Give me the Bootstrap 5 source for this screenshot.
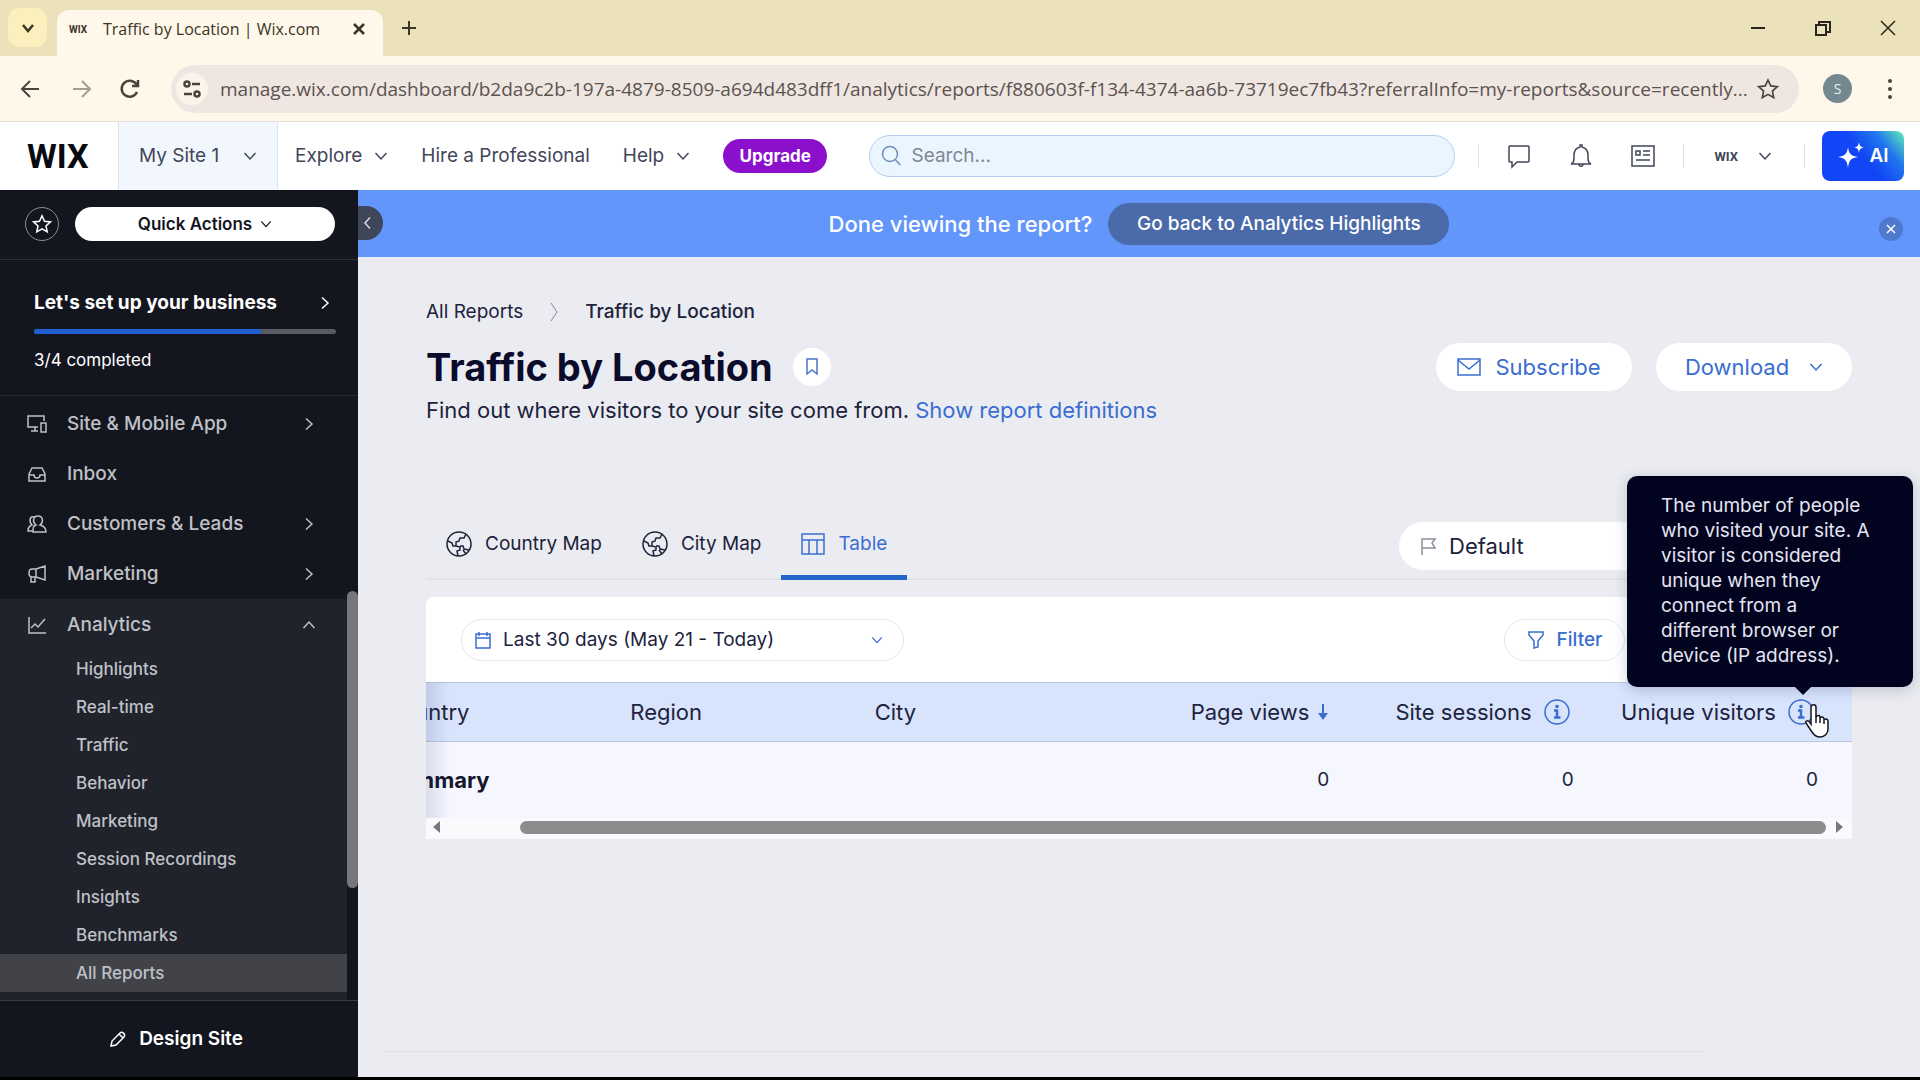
<!DOCTYPE html>
<html lang="en">
<head>
<meta charset="utf-8">
<meta name="viewport" content="width=device-width, initial-scale=1">
<title>Traffic by Location | Wix.com</title>
<link href="https://cdn.jsdelivr.net/npm/bootstrap@5.3.0/dist/css/bootstrap.min.css" rel="stylesheet">
<style>
body{font-family:Inter,"Liberation Sans",sans-serif;font-size:19px;line-height:24px;color:#20223c;background:#ebecf1}
a{text-decoration:none;color:inherit}
svg{fill:none;stroke:currentColor;stroke-width:1.5;flex-shrink:0;display:block}
button{font:inherit;color:inherit;border:0;background:none;padding:0}
.app-shell{min-height:100vh;border-bottom:3px solid #000}
/* browser frame */
.tab-strip{height:56px;background:#ebe2bb;font-family:"Open Sans",sans-serif;padding-left:8px;color:#3a3524}
.tab-search{width:39px;height:39px;border-radius:12px;background:#fbf0bd}
.page-tab{width:326px;height:46px;border-radius:12px 12px 0 0;background:#fff8ea;margin-left:10px;padding:0 14px 8px 8px;font-size:16px}
.fav{width:26px;font:700 10px Roboto,sans-serif;text-align:center}
.acct{font:700 13px Roboto,sans-serif}
.acct-btn{gap:20px;padding:0 4px 0 2px}
.win-controls{gap:41px;padding-right:20px;color:#2b2718}
.url-row{height:65px;background:#fff8ea;padding:0 20px 0 18px;font-family:"Open Sans",sans-serif;color:#4b443c}
.url-box{height:48px;border-radius:24px;background:#efe6e2;padding:0 20px 0 5px;margin-left:29px}
.url-box input{border:0;background:none;outline:0;color:#5b534f;font-size:19px;min-width:0;padding:0;margin-left:12px}
.site-info{width:32px;height:32px;border-radius:50%;background:#fcf3ea}
.avatar{width:29px;height:29px;border-radius:50%;background:#748890;color:#e3eef2;font-size:14px}
/* product header */
.top-nav{height:69px;background:#fff;border-top:1px solid #e4dfd8;color:#42465a;padding-right:16px}
.brand{font:700 34px/36px Roboto,sans-serif;color:#0a0a12;width:118px;padding-left:27px}
.site-menu{background:#f1f7fd;border:solid #dfe5ee;border-width:0 1px;width:160px;padding:0 20px}
.nav-gap{gap:33px;padding-left:17px}
.upgrade{height:34px;width:104px;border-radius:17px;background:#8a10cc;color:#fff;font-weight:700;font-size:17px}
.search{height:42px;border-radius:21px;border:1px solid #b6cdf0;background:#eaf5fe;padding:0 11px;width:586px;color:#6d8fb8}
.search input{border:0;background:none;outline:0;padding:0}
.search input::placeholder{color:#7e8794;opacity:1}
.nav-tools{gap:28px;padding-left:23px}
.nav-icons{gap:38px}
.ai-group{gap:17px}
.vr-line{width:1px;height:24px;background:#dcdfe6}
.ai-btn{width:82px;height:50px;border-radius:8px;color:#fff;font-weight:600;background:linear-gradient(50deg,#1145f5 50%,#2176ee 75%,#62efb0 100%)}
/* sidebar */
.side{width:358px;background:#14161f;color:#fff}
.quick{height:70px;border-bottom:1px solid #2d2f3b;padding:0 23px 2px 25px}
.star-btn{width:34px;height:34px;border-radius:50%;border:1px solid #8b8d96}
.quick-btn{height:34px;border-radius:17px;background:#fff;color:#14161f;font-weight:600;font-size:17px}
.setup{height:136px;border-bottom:1px solid #252732;padding:31px 22px 0 34px}
.setup .progress{height:5px;background:#5a5b62;border-radius:3px;margin-top:14px}
.setup .progress-bar{background:#1f5fd0}
.done-count{font-size:17px;margin-top:14px}
.menu-wrap{position:relative;padding:3px 11px 0 0;color:#bfc1c7;font-weight:500}
.menu-item{height:50px;padding:0 31px 0 27px}
.menu-item span{margin-left:20px}
.analytics{background:#21232c;padding:1px 0 8px}
.sub-item{display:block;height:38px;line-height:38px;padding-left:76px;font-size:17px}
.sub-item.current{background:#424349}
.thumb-v{position:absolute;right:0;top:195px;width:11px;height:297px;border-radius:6px;background:#76777b}
.design{border-top:1px solid #3a3c45;font-weight:600;padding-right:6px}
/* report */
.done-bar{height:67px;background:#6396fa;color:#fff;font-weight:500;font-size:22px;position:relative}
.back-btn{height:42px;border-radius:21px;background:#4b6aa9;font-size:19px;font-weight:500;width:341px}
.fold-btn{position:absolute;left:0;top:16px;width:25px;height:34px;padding-right:5px;border-radius:0 17px 17px 0;background:#40465a;color:#d5d8e2}
.close-btn{position:absolute;right:17px;top:27px;width:24px;height:24px;border-radius:50%;background:#4f79cd}
.report{padding:43px 68px 0}
.report h1{font-size:38px;line-height:44px;font-weight:700;color:#0b0c2b}
.title-row{margin-top:19px}
.intro{font-size:22px;line-height:28px;margin-top:5px}
.mark-btn{width:38px;height:38px;border-radius:50%;background:#fff;color:#4a74cc}
.accent{color:#3a6dd0}
.pill-btn{height:48px;border-radius:24px;background:#fff;color:#3a6dd0;font-size:22px;width:196px;padding-right:10px;gap:14px}
.pill-btn.opens{gap:20px;padding:0}
.views{margin-top:80px;height:76px;border-bottom:2px solid #e1e3e8}
.view-tab{padding:8px 20px 0;height:76px;gap:13px;border-bottom:5px solid transparent}
.view-tab.current{color:#3a6dd0;border-color:#2465cb}
.preset{height:48px;width:453px;border-radius:24px;background:#fff;padding:0 22px;margin-top:18px;font-size:22px}
.panel{background:#fff;margin-top:17px;position:relative;border-radius:8px 8px 0 0}
.tools{height:85px;padding:0 227px 0 35px}
.date-btn{height:42px;width:443px;border-radius:21px;border:1px solid #e6e8ee;padding:0 20px 0 13px}
.filter-btn{height:42px;width:121px;border-radius:21px;border:1px solid #e6e8ee;color:#3a6dd0;font-weight:500}
.grid-clip{overflow:hidden;position:relative}
.grid-clip::before{content:"";position:absolute;z-index:1;left:0;top:0;bottom:0;width:24px;background:linear-gradient(90deg,rgba(30,40,90,.12),transparent)}
.grid{width:calc(100% + 40px);margin-left:-40px;table-layout:fixed;font-size:22px}
.grid th,.grid td{padding:0}
.grid .num{text-align:right;padding-right:34px}
.grid thead th{height:59px;background:#d8e3fc;border:solid #bcc8de;border-width:1px 0;font-weight:400}
.grid tbody>tr>*{height:76px;background:#f5f6fe}
.grid tbody .num{font-size:19px}
.grid tbody th{color:#15172f}
.hscroll{height:21px;background:#fafafc;padding:0 8px 2px 6px}
.thumb-h{height:13px;border-radius:7px;background:#8b8c8e;margin:0 10px 0 80px}
.tip{position:absolute;right:-61px;bottom:152px;width:286px;padding:17px 40px 19px 34px;border-radius:10px;background:#02031f;color:#e4e5f2;line-height:25px;box-shadow:0 3px 14px rgba(30,40,90,.22);z-index:3}
.tip::after{content:"";position:absolute;left:168px;top:100%;border:8px solid transparent;border-top-color:#02031f}
.pointer{position:absolute;right:20px;bottom:100px;z-index:4}
.end-rule{height:1px;background:#e0e2e8;margin:auto 215px 25px 22px}
</style>
<script src="https://cdn.jsdelivr.net/npm/bootstrap@5.3.0/dist/js/bootstrap.bundle.min.js"></script>
</head>
<body>
<svg class="d-none">
  <symbol id="down" viewBox="0 0 14 14"><path d="M1.500 4 7 10l5.500-6"/></symbol>
  <symbol id="right" viewBox="0 0 14 14"><path d="M4 1.500 10 7l-6 5.500"/></symbol>
  <symbol id="globe" viewBox="0 0 26 26"><circle cx="13" cy="13" r="12"/><path d="M20 3l-2 4h-4l-1 3-3 1v4H7l-1-3-4-2M10 15l4 1v3l-3 1 1 5M23 19l-5-1-1-3h-3M17 19l3 4"/></symbol>
  <symbol id="star" viewBox="0 0 20 20"><path d="M10 1.800l2.500 5.400 5.900.7-4.400 4 1.200 5.900L10 14.900l-5.200 2.900L6 11.900l-4.400-4 5.900-.7z"/></symbol>
  <symbol id="info" viewBox="0 0 26 26"><circle cx="13" cy="13" r="12" stroke-width="1.500"/><path d="M10 11.500h3v7M10 18.500h6.500" stroke-width="2.500"/><circle cx="13" cy="7.500" r="1.800" fill="currentColor" stroke="none"/></symbol>
</svg>
<div class="app-shell d-flex flex-column">
  <div class="tab-strip d-flex">
    <button class="tab-search d-flex align-items-center justify-content-center mt-2" aria-label="Search tabs"><svg width="14" height="14"><path d="M2 4l5 6 5-6" stroke-width="2.500"/></svg></button>
    <div class="page-tab d-flex align-items-center mt-auto">
      <span class="fav">WIX</span><span class="ms-2 ps-1 flex-grow-1 text-nowrap">Traffic by Location | Wix.com</span>
      <button aria-label="Close tab"><svg width="20" height="20"><path d="M5 5l10 10M15 5L5 15" stroke-width="2.500"/></svg></button>
    </div>
    <button class="ms-3" aria-label="New tab"><svg width="20" height="20"><path d="M10 3v14M3 10h14" stroke-width="2"/></svg></button>
    <div class="win-controls d-flex align-items-center ms-auto">
      <button aria-label="Minimize"><svg width="24" height="24"><path d="M5 12h14" stroke-width="2"/></svg></button>
      <button aria-label="Restore"><svg width="24" height="24"><path d="M5 9h10v10H5zM8 8V6h11v10h-3" stroke-width="2"/></svg></button>
      <button aria-label="Close"><svg width="24" height="24"><path d="M5 5l14 14M19 5L5 19"/></svg></button>
    </div>
  </div>
  <div class="url-row d-flex align-items-center">
    <button aria-label="Back"><svg width="24" height="24"><path d="M21 12H5M12 4l-8 8 8 8" stroke-width="2"/></svg></button>
    <button class="opacity-50 ms-4 ps-1" aria-label="Forward"><svg width="24" height="24"><path d="M3 12h16M12 4l8 8-8 8" stroke-width="2"/></svg></button>
    <button class="ms-4" aria-label="Reload"><svg width="24" height="24"><path d="M19 15a8 8 0 1 1 0-6.500M20 3v6h-6" stroke-width="2.500"/></svg></button>
    <div class="url-box d-flex align-items-center flex-grow-1">
      <button class="site-info d-flex align-items-center justify-content-center" aria-label="Site information"><svg width="20" height="20"><g stroke-width="2.500"><circle cx="5" cy="5" r="2.500"/><path d="M10 5h8M2 15h8"/><circle cx="15" cy="15" r="2.500"/></g></svg></button>
      <input class="flex-grow-1" type="text" aria-label="Address" value="manage.wix.com/dashboard/b2da9c2b-197a-4879-8509-a694d483dff1/analytics/reports/f880603f-f134-4374-aa6b-73719ec7fb43?referralInfo=my-reports&amp;source=recently...">
      <button aria-label="Bookmark"><svg width="22" height="22"><use href="#star"/></svg></button>
    </div>
    <span class="avatar d-flex align-items-center justify-content-center ms-4">S</span>
    <button class="ms-4 ps-1" aria-label="Menu"><svg width="20" height="24"><g fill="currentColor" stroke="none"><circle cx="10" cy="4" r="2"/><circle cx="10" cy="12" r="2"/><circle cx="10" cy="20" r="2"/></g></svg></button>
  </div>

  <header class="top-nav d-flex align-items-center text-nowrap">
    <a href="#" class="brand">WIX</a>
    <button class="site-menu d-flex align-items-center justify-content-between align-self-stretch">My Site 1<svg width="14" height="14"><use href="#down"/></svg></button>
    <nav class="nav-gap d-flex align-items-center">
      <button class="d-flex align-items-center gap-2">Explore<svg class="ms-1" width="14" height="14"><use href="#down"/></svg></button>
      <a href="#">Hire a Professional</a>
      <button class="d-flex align-items-center gap-2">Help<svg class="ms-1" width="14" height="14"><use href="#down"/></svg></button>
      <button class="upgrade">Upgrade</button>
    </nav>
    <label class="search d-flex align-items-center gap-2 ms-auto"><svg width="22" height="22"><circle cx="9" cy="9" r="7.500"/><path d="M14.500 15l5 5"/></svg><input type="search" class="flex-grow-1" placeholder="Search..." aria-label="Search"></label>
    <div class="nav-tools d-flex align-items-center">
      <span class="vr-line"></span>
      <div class="nav-icons d-flex align-items-center">
        <button aria-label="Chat"><svg width="24" height="26"><path d="M3 3h18a1 1 0 0 1 1 1v14a1 1 0 0 1-1 1H10l-5 5v-5H3a1 1 0 0 1-1-1V4a1 1 0 0 1 1-1z"/></svg></button>
        <button aria-label="Notifications"><svg width="24" height="26"><path d="M2 21h20c-2-1-3-2-3-5v-4c0-4-2-7-6-8V2h-2v2c-4 1-6 4-6 8v4c0 3-1 4-3 5zM10 21c0 3 4 3 4 0"/></svg></button>
        <button aria-label="Updates"><svg width="24" height="24"><path d="M1 2h22v20H1zM5 7h4v4H5zM12 7h7M12 11h7M5 16h14"/></svg></button>
      </div>
      <span class="vr-line"></span>
      <button class="acct-btn d-flex align-items-center" aria-label="Account"><span class="acct">WIX</span><svg width="14" height="14"><use href="#down"/></svg></button>
      <div class="ai-group d-flex align-items-center">
        <span class="vr-line"></span>
        <button class="ai-btn d-flex align-items-center justify-content-center gap-1"><svg width="28" height="28"><g fill="#fff" stroke="none"><path d="M11 5c1 7 3 9 10 10-7 1-9 3-10 11C10 18 8 16 1 15c7-1 9-3 10-10z"/><path d="M22 0c.6 4 1.500 5 5 5.500-3.500.5-4.400 1.500-5 5.500-.6-4-1.500-5-5-5.500 3.500-.5 4.400-1.500 5-5.500z"/></g></svg>AI</button>
      </div>
    </div>
  </header>

  <div class="d-flex flex-grow-1">
    <aside class="side d-flex flex-column flex-shrink-0">
      <div class="quick d-flex align-items-center gap-3">
        <button class="star-btn d-flex align-items-center justify-content-center" aria-label="Favorites"><svg width="20" height="20"><use href="#star"/></svg></button>
        <button class="quick-btn flex-grow-1 d-flex align-items-center justify-content-center">Quick Actions<svg class="ms-2" width="12" height="12"><use href="#down"/></svg></button>
      </div>
      <div class="setup">
        <a href="#" class="d-flex align-items-center justify-content-between fw-bold pe-1">Let's set up your business<svg width="14" height="14"><use href="#right"/></svg></a>
        <div class="progress" role="progressbar" aria-label="Setup progress" aria-valuenow="75" aria-valuemin="0" aria-valuemax="100"><div class="progress-bar" style="width:75%"></div></div>
        <div class="done-count">3/4 completed</div>
      </div>
      <nav class="menu-wrap">
        <a href="#" class="menu-item d-flex align-items-center"><svg width="20" height="20"><path d="M11 13H1V2h16v5M4 17h7M8 13v4M14 9h5v9h-5z"/></svg><span>Site &amp; Mobile App</span><svg class="ms-auto" width="14" height="14"><use href="#right"/></svg></a>
        <a href="#" class="menu-item d-flex align-items-center"><svg width="20" height="20"><path d="M2 10l3-6h10l3 6v7H2zM2 11h5c0 4 6 4 6 0h5"/></svg><span>Inbox</span></a>
        <a href="#" class="menu-item d-flex align-items-center"><svg width="20" height="20"><path d="M9 11c-4-3-3-9 2-9s6 6 2 9c4 1 6 3 6 7H6c0-4 0-6 3-7zM8 3C2 1 2 8 5 11c-3 1-4 3-4 6h5"/></svg><span>Customers &amp; Leads</span><svg class="ms-auto" width="14" height="14"><use href="#right"/></svg></a>
        <a href="#" class="menu-item d-flex align-items-center"><svg width="20" height="20"><path d="M9 5l9-3v14l-9-3H5c-4 0-4-8 0-8zM9 5v8M4 13v5h4v-5"/></svg><span>Marketing</span><svg class="ms-auto" width="14" height="14"><use href="#right"/></svg></a>
        <div class="analytics">
          <a href="#" class="menu-item d-flex align-items-center"><svg width="20" height="20"><path d="M2 2v16h17M4 13l4-4 3 3 7-8"/></svg><span>Analytics</span><svg class="ms-auto" width="14" height="14"><path d="M1.500 10 7 4l5.500 6"/></svg></a>
          <a href="#" class="sub-item">Highlights</a>
          <a href="#" class="sub-item">Real-time</a>
          <a href="#" class="sub-item">Traffic</a>
          <a href="#" class="sub-item">Behavior</a>
          <a href="#" class="sub-item">Marketing</a>
          <a href="#" class="sub-item">Session Recordings</a>
          <a href="#" class="sub-item">Insights</a>
          <a href="#" class="sub-item">Benchmarks</a>
          <a href="#" class="sub-item current" aria-current="page">All Reports</a>
        </div>
        <div class="thumb-v"></div>
      </nav>
      <a href="#" class="design d-flex align-items-center justify-content-center gap-2 flex-grow-1"><svg class="me-1" width="18" height="18"><path d="M2 16l1-5 8-8c2-2 6 1 4 4l-8 8zM10 4l4 4"/></svg>Design Site</a>
    </aside>

    <main class="flex-grow-1 d-flex flex-column overflow-hidden">
      <div class="done-bar d-flex align-items-center justify-content-center gap-3">
        <button class="fold-btn d-flex align-items-center justify-content-center" aria-label="Collapse sidebar"><svg width="14" height="14"><path d="M9 1.500 4 7l5 5.500"/></svg></button>
        <span>Done viewing the report?</span>
        <button class="back-btn">Go back to Analytics Highlights</button>
        <button class="close-btn d-flex align-items-center justify-content-center" aria-label="Dismiss"><svg width="10" height="10"><path d="M1 1l8 8M9 1L1 9"/></svg></button>
      </div>
      <div class="report">
        <div class="d-flex align-items-center"><a href="#">All Reports</a><svg class="mx-4 opacity-50" width="14" height="20"><path d="M4 1l6 9-6 9" stroke-width="1"/></svg><span class="fw-medium">Traffic by Location</span></div>
        <div class="title-row d-flex justify-content-between align-items-center">
          <div class="d-flex align-items-center gap-3"><h1 class="mb-0">Traffic by Location</h1>
          <button class="mark-btn d-flex align-items-center justify-content-center ms-1" aria-label="Save report"><svg width="14" height="18"><path d="M2 1h10v15l-5-4-5 4z"/></svg></button></div>
          <div class="d-flex gap-4">
            <button class="pill-btn d-flex align-items-center justify-content-center"><svg width="24" height="20"><path d="M1 2h22v16H1zM1 3l11 9 11-9"/></svg>Subscribe</button>
            <button class="pill-btn opens d-flex align-items-center justify-content-center">Download<svg width="14" height="14"><use href="#down"/></svg></button>
          </div>
        </div>
        <div class="intro">Find out where visitors to your site come from. <a href="#" class="accent">Show report definitions</a></div>
        <div class="views d-flex align-items-start justify-content-between">
          <div class="d-flex">
            <button class="view-tab d-flex align-items-center"><svg width="26" height="26"><use href="#globe"/></svg>Country Map</button>
            <button class="view-tab d-flex align-items-center"><svg width="26" height="26"><use href="#globe"/></svg>City Map</button>
            <button class="view-tab current d-flex align-items-center"><svg width="24" height="24"><path d="M1 2h22v20H1zM1 8h22M8 8v14M16 8v14"/></svg>Table</button>
          </div>
          <button class="preset d-flex align-items-center gap-2"><svg class="opacity-50 me-1" width="16" height="18"><path d="M1 18V2h13l-3 4 3 5H1"/></svg>Default</button>
        </div>
        <section class="panel">
          <div class="tools d-flex align-items-center justify-content-between">
            <button class="date-btn d-flex align-items-center"><svg class="accent me-2" width="16" height="18"><path d="M1 3h14v14H1zM1 7h14M4 1v4M12 1v4"/></svg><span class="ps-1">Last 30 days (May 21 - Today)</span><svg class="ms-auto accent" width="12" height="12"><use href="#down"/></svg></button>
            <button class="filter-btn d-flex align-items-center justify-content-center gap-2"><svg class="me-1" width="18" height="18"><path d="M2 1h14v3l-5 6v6l-4 1v-7L2 4z"/></svg>Filter</button>
          </div>
          <div class="grid-clip">
            <table class="grid">
              <thead><tr><th>Country</th><th>Region</th><th>City</th>
                <th class="num"><span class="d-flex align-items-center justify-content-end gap-2">Page views<svg class="accent" width="12" height="18"><path d="M6 1v13" stroke-width="2"/><path d="M1 10h10l-5 7z" fill="currentColor" stroke="none"/></svg></span></th>
                <th class="num"><span class="d-flex align-items-center justify-content-end gap-2">Site sessions<button class="accent mx-1" aria-label="About site sessions"><svg width="26" height="26"><use href="#info"/></svg></button></span></th>
                <th class="num"><span class="d-flex align-items-center justify-content-end gap-2">Unique visitors<button class="accent mx-1" aria-label="About unique visitors" aria-describedby="tip"><svg width="26" height="26"><use href="#info"/></svg></button></span></th></tr></thead>
              <tbody><tr><th>Summary</th><td></td><td></td><td class="num">0</td><td class="num">0</td><td class="num">0</td></tr></tbody>
            </table>
          </div>
          <div class="hscroll d-flex align-items-center">
            <svg width="8" height="12"><path d="M8 0v12L1 6z" fill="#77787b" stroke="none"/></svg>
            <div class="thumb-h flex-grow-1"></div>
            <svg width="8" height="12"><path d="M0 0v12l7-6z" fill="#77787b" stroke="none"/></svg>
          </div>
          <div class="tip" id="tip" role="tooltip">The number of people who visited your site. A visitor is considered unique when they connect from a different browser or device (IP address).</div>
          <svg class="pointer" width="28" height="36" viewBox="0 0 28 36"><path d="M7 21V4c0-3 5-3 5 0v10c1-2 4-2 4 0v1c1-2 4-1 4 1v1c1-2 4-1 4 1v8c0 4-3 8-8 8-4 0-6-2-8-5l-6-9c-1-2 2-4 5 1z" fill="#fff" stroke="#15161c"/><path d="M12 13v7M16 15v5M20 17v4" stroke="#15161c"/></svg>
        </section>
      </div>
      <div class="end-rule"></div>
    </main>
  </div>
</div>
</body>
</html>
